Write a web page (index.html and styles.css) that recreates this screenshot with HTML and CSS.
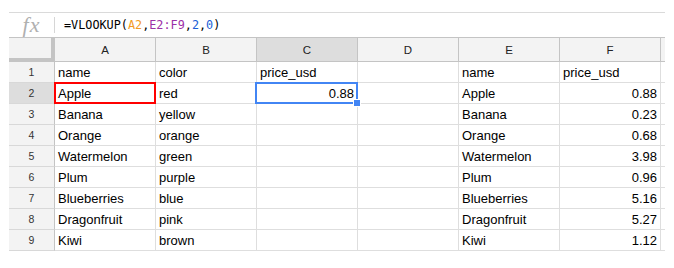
FILE: index.html
```html
<!DOCTYPE html>
<html>

<head>
  <title>Sheet</title>
  <link rel="stylesheet" href="styles.css">
</head>

<body>
  <div class="sheet">
    <div class="formula-bar">
      <div class="fx">fx</div>
      <div class="formula">=VLOOKUP(<span class="ref-a">A2</span>,<span class="ref-e">E2:F9</span>,<span class="num">2</span>,<span class="num">0</span>)</div>
    </div>

    <div class="grid">
      <!-- column headers -->
      <div class="corner"></div>
      <div class="col-head">A</div>
      <div class="col-head">B</div>
      <div class="col-head active">C</div>
      <div class="col-head">D</div>
      <div class="col-head">E</div>
      <div class="col-head">F</div>
      <div class="col-head edge"></div>

      <div class="row-head">1</div>
      <div class="cell">name</div>
      <div class="cell">color</div>
      <div class="cell">price_usd</div>
      <div class="cell"></div>
      <div class="cell">name</div>
      <div class="cell">price_usd</div>
      <div class="cell edge"></div>

      <div class="row-head active">2</div>
      <div class="cell lookup">Apple</div>
      <div class="cell">red</div>
      <div class="cell right selected">0.88<span class="handle"></span></div>
      <div class="cell"></div>
      <div class="cell">Apple</div>
      <div class="cell right">0.88</div>
      <div class="cell edge"></div>

      <div class="row-head">3</div>
      <div class="cell">Banana</div>
      <div class="cell">yellow</div>
      <div class="cell"></div>
      <div class="cell"></div>
      <div class="cell">Banana</div>
      <div class="cell right">0.23</div>
      <div class="cell edge"></div>

      <div class="row-head">4</div>
      <div class="cell">Orange</div>
      <div class="cell">orange</div>
      <div class="cell"></div>
      <div class="cell"></div>
      <div class="cell">Orange</div>
      <div class="cell right">0.68</div>
      <div class="cell edge"></div>

      <div class="row-head">5</div>
      <div class="cell">Watermelon</div>
      <div class="cell">green</div>
      <div class="cell"></div>
      <div class="cell"></div>
      <div class="cell">Watermelon</div>
      <div class="cell right">3.98</div>
      <div class="cell edge"></div>

      <div class="row-head">6</div>
      <div class="cell">Plum</div>
      <div class="cell">purple</div>
      <div class="cell"></div>
      <div class="cell"></div>
      <div class="cell">Plum</div>
      <div class="cell right">0.96</div>
      <div class="cell edge"></div>

      <div class="row-head">7</div>
      <div class="cell">Blueberries</div>
      <div class="cell">blue</div>
      <div class="cell"></div>
      <div class="cell"></div>
      <div class="cell">Blueberries</div>
      <div class="cell right">5.16</div>
      <div class="cell edge"></div>

      <div class="row-head">8</div>
      <div class="cell">Dragonfruit</div>
      <div class="cell">pink</div>
      <div class="cell"></div>
      <div class="cell"></div>
      <div class="cell">Dragonfruit</div>
      <div class="cell right">5.27</div>
      <div class="cell edge"></div>

      <div class="row-head">9</div>
      <div class="cell">Kiwi</div>
      <div class="cell">brown</div>
      <div class="cell"></div>
      <div class="cell"></div>
      <div class="cell">Kiwi</div>
      <div class="cell right">1.12</div>
      <div class="cell edge"></div>
    </div>
  </div>
</body>

</html>
```

FILE: styles.css
```css
:root {
  --head-bg: #f3f3f3;
  --head-active: #dddddd;
  --head-line: #c4c4c4;
  --grid-line: #dedede;
  --select-blue: #4285f4;
}

body {
  margin: 0;
  background: #ffffff;
  font-family: "Liberation Sans", Arial, sans-serif;
  color: #000000;
}

.sheet {
  margin: 12px 0 0 9px;
  width: 656px;
}

/* formula bar */
.formula-bar {
  display: flex;
  align-items: center;
  height: 24px;
  border-top: 1px solid #dadada;
  border-bottom: 1px solid var(--head-line);
}

.fx {
  width: 45px;
  height: 16px;
  line-height: 16px;
  border-right: 1px solid #d6d6d6;
  text-align: center;
  font-family: "Liberation Serif", "Times New Roman", serif;
  font-style: italic;
  font-size: 22px;
  color: #b0b0b0;
  letter-spacing: 1px;
}

.formula {
  padding-left: 9px;
  font-family: "DejaVu Sans Mono", "Liberation Mono", monospace;
  font-size: 11.8px;
  color: #000000;
}

.ref-a { color: #f29b1f; }
.ref-e { color: #9c2fa8; }
.num { color: #1a5fd6; }

/* grid */
.grid {
  display: grid;
  grid-template-columns: 46px repeat(6, 101px) 4px;
  grid-template-rows: 24px repeat(9, 21px);
}

.corner {
  background: var(--head-bg);
  border-right: 4px solid var(--head-line);
  border-bottom: 4px solid var(--head-line);
}

.col-head {
  background: var(--head-bg);
  border-right: 1px solid var(--head-line);
  border-bottom: 1px solid var(--head-line);
  display: flex;
  align-items: center;
  justify-content: center;
  font-size: 11.5px;
  color: #222222;
}

.col-head.active {
  background: var(--head-active);
}

.col-head.edge {
  border-right: none;
}

.row-head {
  background: var(--head-bg);
  border-right: 1px solid var(--head-line);
  border-bottom: 1px solid #d8d8d8;
  display: flex;
  align-items: center;
  justify-content: center;
  font-size: 10.5px;
  color: #333333;
}

.row-head.active {
  background: var(--head-active);
}

.cell {
  position: relative;
  border-right: 1px solid var(--grid-line);
  border-bottom: 1px solid var(--grid-line);
  padding: 0 3px;
  font-size: 13px;
  line-height: 21px;
  white-space: nowrap;
}

.cell.edge {
  border-right: none;
  padding: 0;
}

.cell.right {
  text-align: right;
}

/* the cell that holds the lookup key */
.lookup::after {
  content: "";
  position: absolute;
  top: -1px;
  left: -1px;
  right: -1px;
  bottom: -1px;
  border: 2px solid #ff0000;
}

/* selected cell */
.selected::after {
  content: "";
  position: absolute;
  top: -1px;
  left: -2px;
  right: -1px;
  bottom: -1px;
  border: 2px solid var(--select-blue);
}

.handle {
  position: absolute;
  right: -4px;
  bottom: -4px;
  width: 6px;
  height: 6px;
  background: var(--select-blue);
  border: 1px solid #ffffff;
  z-index: 2;
}
```
